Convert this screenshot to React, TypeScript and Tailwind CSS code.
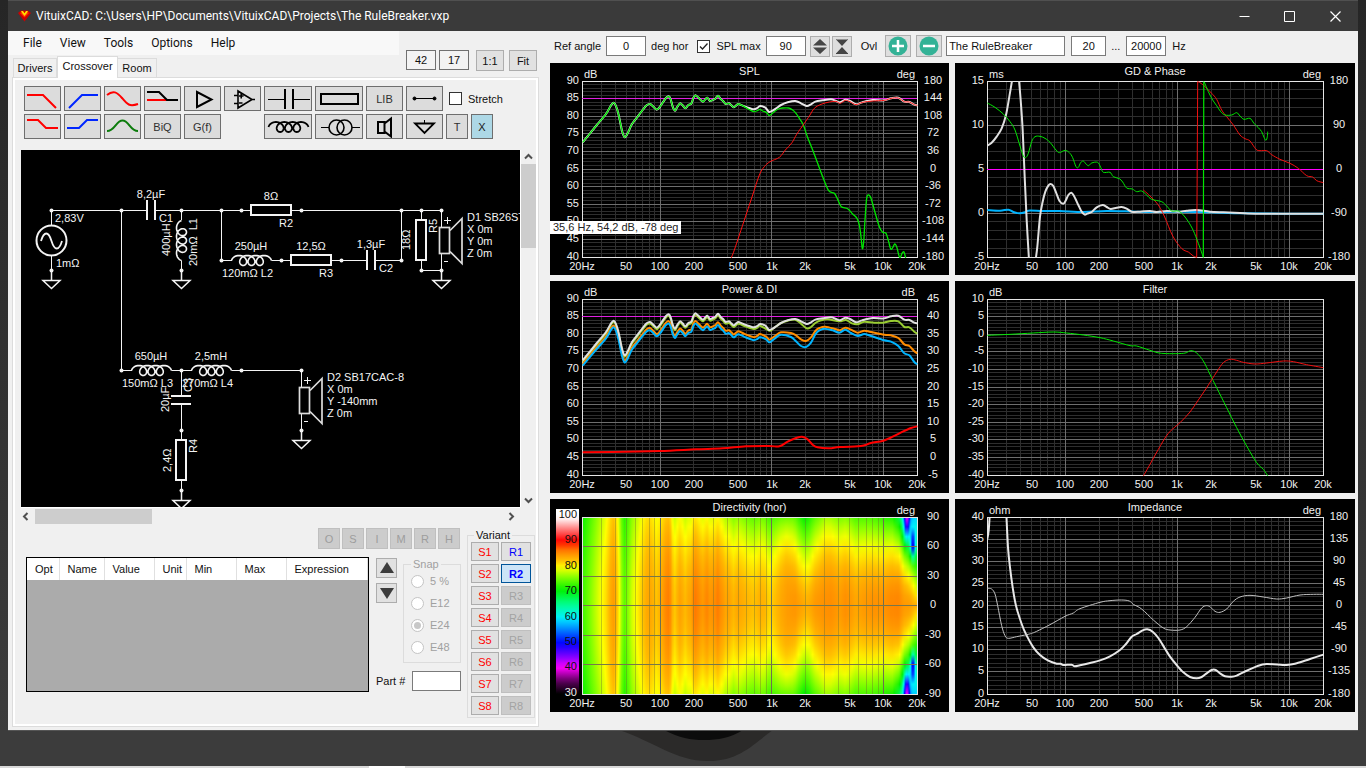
import React from "react";

type Pt = [number, number];

/* ---------- curve helpers ---------- */

const parse = (s: string): Pt[] =>
  s
    .trim()
    .split(/\s+/)
    .map((p) => p.split(",").map(Number) as Pt);

// Catmull-Rom spline; curve samples are stored in thirds of a pixel.
function spline(points: Pt[], dx: number, dy: number): string {
  const p = points.map(([x, y]) => [x / 3 - dx, y / 3 - dy] as Pt);
  const f = (n: number) => n.toFixed(2);
  let d = `M${f(p[0][0])} ${f(p[0][1])}`;
  for (let i = 0; i < p.length - 1; i++) {
    const a = p[Math.max(i - 1, 0)];
    const b = p[i];
    const c = p[i + 1];
    const e = p[Math.min(i + 2, p.length - 1)];
    d += `C${f(b[0] + (c[0] - a[0]) / 6)} ${f(b[1] + (c[1] - a[1]) / 6)} ${f(c[0] - (e[0] - b[0]) / 6)} ${f(c[1] - (e[1] - b[1]) / 6)} ${f(c[0])} ${f(c[1])}`;
  }
  return d;
}

/* ---------- curve data ---------- */

const LOW = parse(
  "110,247 150,198 180,162 195,136 203,128 210,138 218,165 228,212 236,232 245,220 258,192 275,170 290,150 302,136 312,132 322,140 332,149 342,140 352,125 360,114 368,109 374,118 380,140 387,152 393,142 402,130 410,136 418,145 427,135 436,131 442,114 448,106 456,112 464,120 471,125 478,118 484,113 492,123 500,120 508,116 516,107 524,117 532,124 539,132 549,130 556,136 563,142 570,137 577,132 588,136"
);
const WOOFER = LOW.concat(
  parse(
    "600,143 612,150 624,155 634,152 642,148 650,153 657,155 664,160 669,166 676,163 685,155 697,147 710,144 728,144 740,150 750,160 760,175 772,195 784,230 800,270 815,310 830,350 848,392 865,400 875,418 886,440 905,446 920,462 933,475 940,495 945,530 949,566 953,545 957,480 962,415 968,405 975,415 985,450 1000,500 1010,517 1020,520 1028,545 1034,567 1040,563 1046,552 1052,560 1057,580 1062,594 1068,580 1074,576 1079,594"
  )
);
const TOTAL = LOW.concat(
  parse(
    "600,141 612,145 624,148 634,144 642,138 657,142 664,150 670,156 680,152 692,144 705,135 725,127 748,123 765,130 782,138 795,133 808,125 830,121 855,118 870,123 882,127 898,119 912,123 930,133 945,128 955,125 980,120 1015,121 1035,115 1057,113 1075,125 1090,126 1105,134 1114,136"
  )
);
const TWEETER = parse(
  "555,596 565,570 580,525 600,465 620,405 640,345 655,320 672,305 700,292 718,270 738,248 752,223 775,190 790,168 805,145 825,133 850,126 870,124 882,130 898,121 912,125 930,134 950,127 980,123 1015,121 1035,115 1057,114 1075,125 1090,126 1105,134 1114,136"
);

const shifted = (base: number, slope: number): Pt[] =>
  TOTAL.filter(([x]) => x < 655).map(([x, y]) => [x, y + 6 + base + (x - 110) * slope] as Pt);

const WINDOW_AVG = shifted(4, 0.002).concat(
  parse(
    "670,164 680,159 692,150 705,141 725,134 748,131 765,143 782,157 795,153 808,141 825,133 845,130 880,136 900,132 920,143 938,144 955,137 985,140 1012,140 1035,135 1057,136 1075,153 1090,154 1105,167 1114,173"
  )
);
const EARLY = shifted(11, 0.036).concat(
  parse(
    "660,182 669,191 677,187 690,178 705,169 735,171 750,178 765,190 780,195 795,184 808,165 820,156 838,152 870,160 882,163 898,155 915,161 935,170 955,164 975,168 1015,176 1035,178 1057,186 1075,205 1090,210 1105,226 1114,232"
  )
);
const POWER = shifted(16, 0.044).concat(
  parse(
    "660,190 669,199 677,195 690,185 705,176 735,183 750,196 765,210 780,213 795,200 808,175 820,163 835,158 860,163 880,170 898,161 915,171 935,180 955,174 975,180 1015,193 1035,197 1057,210 1075,232 1090,238 1105,258 1114,265"
  )
);
const DI = parse(
  "110,529 200,528 340,525 450,520 530,517 600,511 670,510 700,511 725,497 750,486 768,482 785,490 800,506 815,514 850,517 880,513 935,511 955,508 975,501 1012,494 1040,482 1070,467 1095,456 1114,451"
);

const GD = [
  parse("110,258 125,248 140,230 155,205 168,165 178,110 188,50"),
  parse("206,50 212,120 218,210 224,350 230,480 237,600"),
  parse(
    "256,605 262,560 270,470 278,425 286,395 295,377 302,372 310,378 318,397 328,422 340,431 348,420 355,405 364,398 372,408 385,435 395,455 404,464 412,461 425,456 440,442 458,435 470,441 482,447 500,443 515,441 530,446 545,455 570,455 600,453 620,456 650,453 685,455 710,452 740,450 780,455 820,457 870,459 930,461 1120,461"
  ),
];
const GD_XO = parse(
  "112,450 150,452 175,449 190,456 208,460 225,457 235,452 280,453 330,453 400,456 470,453 560,455 640,456 700,455 780,457 880,460 1000,461 1120,461"
);
const PH_RED = [
  parse("580,390 595,403 610,418 625,435 638,458 650,485 662,515 675,540 690,560 702,571 715,576 730,588 740,592"),
  parse(
    "743,65 750,68 765,80 785,100 800,118 815,150 830,170 850,195 870,225 885,236 900,243 918,268 930,272 950,272 965,284 990,298 1020,310 1045,325 1070,347 1088,351 1100,362 1120,368"
  ),
];
const PH_GREEN = [
  parse(
    "112,129 135,142 160,162 180,185 195,210 210,258 220,288 227,293 235,280 245,245 255,230 270,229 285,235 300,247 318,270 328,278 345,271 358,278 368,293 378,320 385,322 392,308 400,303 408,312 416,317 425,309 443,307 452,322 460,337 480,337 490,350 508,356 518,366 530,384 547,387 560,395 575,393 590,405 605,418 635,425 650,438 665,453 685,453 700,465 715,485 730,512 745,550 760,592"
  ),
  parse(
    "763,66 775,95 788,120 800,137 812,155 825,165 845,165 860,158 870,168 882,178 900,175 912,190 925,203 935,215 942,232 948,241 952,230 953,215"
  ),
];

const FILTER_G = parse(
  "112,178 180,175 250,171 310,168 350,171 400,177 450,185 490,195 540,209 560,210 600,223 635,232 700,232 722,224 740,231 760,255 780,295 800,335 830,395 860,455 890,510 920,560 940,580 955,602"
);
const FILTER_R = parse(
  "579,602 600,565 625,520 655,472 690,440 720,408 745,372 770,335 800,288 820,260 840,250 860,253 880,259 915,264 950,261 1000,255 1030,257 1070,266 1120,275"
);

const Z_MAG = [
  parse("112,135 116,110 119,65"),
  parse(
    "169,60 174,160 180,220 188,280 198,335 215,390 230,425 250,460 270,483 295,500 320,509 332,509 340,513 365,512 374,517 390,514 420,507 450,499 480,487 510,468 528,450 545,428 560,420 578,409 592,406 608,413 625,432 645,464 660,488 680,513 700,535 720,549 740,553 755,549 770,538 785,528 797,528 810,538 825,547 845,548 860,545 880,535 920,517 950,510 1010,513 1040,508 1080,495 1120,482"
  ),
];
const Z_PH = parse(
  "112,283 125,285 135,300 143,335 155,395 165,425 175,433 200,428 230,422 245,418 260,412 300,392 345,367 370,357 390,344 450,325 480,320 515,318 538,321 550,331 575,345 610,378 640,402 660,408 690,408 710,398 735,370 755,342 770,335 782,340 795,352 810,355 830,345 850,322 870,309 900,304 940,309 980,315 1010,312 1050,303 1090,301 1120,301"
);

/* ---------- chart frame ---------- */

const FREQS: [number, string][] = [
  [20, "20Hz"],
  [50, "50"],
  [100, "100"],
  [200, "200"],
  [500, "500"],
  [1000, "1k"],
  [2000, "2k"],
  [5000, "5k"],
  [10000, "10k"],
  [20000, "20k"],
];
const GRID_F = [
  30, 40, 50, 60, 70, 80, 90, 100, 200, 300, 400, 500, 600, 700, 800, 900, 1000, 2000, 3000, 4000, 5000, 6000, 7000,
  8000, 9000, 10000,
];
const isDecade = (f: number) => f === 100 || f === 1000 || f === 10000;
const TOP = 18;
const LEFT = 32;

function range(from: number, to: number, step: number): number[] {
  const out: number[] = [];
  const n = Math.round((to - from) / step);
  for (let i = 0; i <= n; i++) out.push(from + i * step);
  return out;
}

type ChartProps = {
  id: string;
  title: string;
  w: number;
  h: number;
  divs: number;
  minor: number;
  left?: number[];
  leftUnit?: string;
  right?: number[];
  rightUnit?: string;
  field?: React.ReactNode;
  legend?: React.ReactNode;
  children?: React.ReactNode;
};

function Chart(p: ChartProps) {
  const right = p.w - 32;
  const bottom = p.h - 18;
  const fx = (f: number) => LEFT + ((right - LEFT) * Math.log10(f / 20)) / 3;
  const fy = (i: number, n: number) => TOP + ((bottom - TOP) * i) / n;
  const snap = (n: number) => Math.floor(n) + 0.5;
  const heat = Boolean(p.field);
  return (
    <svg
      viewBox={`0 0 ${p.w} ${p.h}`}
      className="block h-auto w-full bg-black"
      role="img"
      aria-label={p.title}
      fontFamily="'Liberation Sans', Arial, sans-serif"
      fontSize="11"
      fill="#f0f0f0"
    >
      <clipPath id={`clip-${p.id}`}>
        <rect x={LEFT} y={TOP} width={right - LEFT + 1} height={bottom - TOP + 1} />
      </clipPath>
      {p.field}
      <g shapeRendering="crispEdges" fill="none">
        {!heat &&
          range(1, p.divs * p.minor - 1, 1).map((i) => (
            <path key={i} d={`M${LEFT} ${snap(fy(i, p.divs * p.minor))}H${right}`} stroke="#2e2e2e" />
          ))}
        {GRID_F.filter((f) => !isDecade(f)).map((f) => (
          <path
            key={f}
            d={`M${snap(fx(f))} ${TOP}V${bottom}`}
            stroke={heat ? "#6b6b30" : "#2e2e2e"}
            strokeOpacity={heat ? 0.38 : 1}
          />
        ))}
        {GRID_F.filter(isDecade).map((f) => (
          <path key={f} d={`M${snap(fx(f))} ${TOP}V${bottom}`} stroke={heat ? "#6f6f50" : "#6e6e6e"} />
        ))}
        {range(1, p.divs - 1, 1).map((i) => (
          <path key={i} d={`M${LEFT} ${snap(fy(i, p.divs))}H${right}`} stroke={heat ? "#77774c" : "#6e6e6e"} />
        ))}
        <rect x={LEFT + 0.5} y={TOP + 0.5} width={right - LEFT} height={bottom - TOP} stroke="#e6e6e6" />
      </g>
      <g clipPath={`url(#clip-${p.id})`} fill="none" strokeLinejoin="round">
        {p.children}
      </g>
      <text x={p.w / 2} y="12" textAnchor="middle">
        {p.title}
      </text>
      {p.leftUnit && (
        <text x="34" y="15">
          {p.leftUnit}
        </text>
      )}
      {p.rightUnit && (
        <text x={right - 2} y="15" textAnchor="end">
          {p.rightUnit}
        </text>
      )}
      {p.left?.map((v, i) => (
        <text key={v} x="29" y={Math.floor(fy(i, p.left!.length - 1)) + 3} textAnchor="end">
          {v}
        </text>
      ))}
      {p.right?.map((v, i) => (
        <text key={v} x={p.w - 16} y={Math.floor(fy(i, p.right!.length - 1)) + 3} textAnchor="middle">
          {v}
        </text>
      ))}
      {FREQS.map(([f, t]) => (
        <text key={t} x={Math.round(fx(f))} y={bottom + 13} textAnchor="middle">
          {t}
        </text>
      ))}
      {p.legend}
    </svg>
  );
}

/* ---------- directivity field ---------- */

const COLORS: [number, number, number, number][] = [
  [29, 0, 0, 0],
  [34, 90, 0, 90],
  [39.5, 255, 0, 255],
  [44, 120, 0, 255],
  [49, 0, 0, 255],
  [54, 0, 120, 255],
  [59, 0, 240, 255],
  [64.5, 0, 255, 140],
  [70, 0, 240, 0],
  [75, 130, 255, 0],
  [79, 255, 255, 0],
  [82, 255, 185, 0],
  [85.5, 255, 125, 0],
  [89.5, 255, 0, 0],
  [95, 255, 150, 150],
  [98.5, 255, 255, 255],
];

function colorOf(v: number): string {
  if (v <= COLORS[0][0]) return "rgb(0,0,0)";
  for (let i = 1; i < COLORS.length; i++) {
    const b = COLORS[i];
    if (v <= b[0]) {
      const a = COLORS[i - 1];
      const t = (v - a[0]) / (b[0] - a[0]);
      const m = (k: number) => Math.round(a[k] + (b[k] - a[k]) * t);
      return `rgb(${m(1)},${m(2)},${m(3)})`;
    }
  }
  return "rgb(255,255,255)";
}

function lerp(points: Pt[], x: number): number {
  if (x <= points[0][0]) return points[0][1];
  for (let i = 1; i < points.length; i++) {
    if (x <= points[i][0]) {
      const [x0, y0] = points[i - 1];
      const [x1, y1] = points[i];
      return y0 + ((y1 - y0) * (x - x0)) / (x1 - x0);
    }
  }
  return points[points.length - 1][1];
}

const DROP = parse(
  "110,2 230,2 340,3 440,5.5 520,6.5 600,8 680,8.5 740,10 775,13 800,11 840,8.5 900,9.5 1000,12 1040,14 1060,18 1075,24 1090,26 1114,25"
);
const SHAPE = parse("110,1.8 680,1.8 720,2.5 760,1.5 790,1.4 840,2 1000,1.7 1060,2 1090,1.5 1114,0.95");

function levelAt(x: number, deg: number): number {
  const axis = 89.6 - (lerp(TOTAL, x) - 65) / 10.55;
  const a = Math.abs(deg);
  const g = (cx: number, wx: number, ca: number, wa: number) =>
    Math.exp(-(((x - cx) / wx) ** 2) - ((a - ca) / wa) ** 2);
  return axis - lerp(DROP, x) * (a / 90) ** lerp(SHAPE, x) - 20 * g(1101, 8, 62, 12) - 19 * g(1083, 9, 88, 20);
}

function Field() {
  const cols = range(0, 334, 1);
  const angles = range(-90, 90, 10);
  return (
    <g shapeRendering="crispEdges">
      <defs>
        {cols.map((c) => (
          <linearGradient key={c} id={`col${c}`} x1="0" y1="0" x2="0" y2="1">
            {angles.map((a) => (
              <stop key={a} offset={(a + 90) / 180} stopColor={colorOf(levelAt(110 + c * 3, a))} />
            ))}
          </linearGradient>
        ))}
        <linearGradient id="scale" x1="0" y1="0" x2="0" y2="1">
          {range(0, 36, 1).map((i) => (
            <stop key={i} offset={i / 36} stopColor={colorOf(102 - (i / 36) * 73)} />
          ))}
        </linearGradient>
      </defs>
      {cols.map((c) => (
        <rect key={c} x={LEFT + c} y={TOP} width="1" height="177" fill={`url(#col${c})`} />
      ))}
      <rect x="6" y="10" width="23" height="185" fill="url(#scale)" />
    </g>
  );
}

function ScaleLabels() {
  return (
    <g>
      {range(0, 7, 1).map((i) => (
        <text key={i} x="27" y={Math.round(19 + i * 25.4)} textAnchor="end" fill={i === 7 ? "#f0f0f0" : "#101010"}>
          {100 - i * 10}
        </text>
      ))}
    </g>
  );
}

/* ---------- schematic ---------- */

function coilPath(): string {
  const c = 1.326;
  const r = 5.4;
  let d = "";
  const n = 112;
  for (let i = 0; i <= n; i++) {
    const t = -Math.PI / 2 + (i / n) * 7 * Math.PI;
    const x = c * (t + Math.PI / 2) + r * Math.sin(t) + r;
    const y = -5 * Math.cos(t);
    d += `${i ? "L" : "M"}${x.toFixed(2)} ${y.toFixed(2)}`;
  }
  return d;
}
const COIL = coilPath();

const Coil = ({ x, y, up }: { x: number; y: number; up?: boolean }) => (
  <path d={COIL} transform={`translate(${x} ${y})${up ? " rotate(-90)" : ""}`} strokeWidth="1.6" />
);
const Ground = ({ x, y }: { x: number; y: number }) => (
  <path d={`M${x} ${y}v9.5M${x - 8.5} ${y + 10}h17l-8.5 8z`} strokeWidth="1.5" />
);
const Speaker = ({ x, y }: { x: number; y: number }) => (
  <g strokeWidth="1.7" stroke="#dcdcdc">
    <rect x={x - 2} y={y} width="10" height="26" />
    <path d={`M${x + 8.5} ${y + 3}l12 -12v45l-12 -12`} />
  </g>
);
const V = ({ x, y, children }: { x: number; y: number; children: React.ReactNode }) => (
  <text transform={`translate(${x} ${y}) rotate(-90)`}>{children}</text>
);

const NODES: Pt[] = [
  [30.5, 60.5], [100.5, 60.5], [160.5, 60.5], [200.5, 60.5], [220.5, 60.5], [280.5, 60.5], [380.5, 60.5],
  [400.5, 60.5], [420.5, 60.5], [30.5, 120.5], [160.5, 120.5], [200.5, 110.5], [260.5, 110.5], [320.5, 110.5],
  [380.5, 110.5], [400.5, 120.5], [420.5, 120.5], [100.5, 220.5], [160.5, 220.5], [220.5, 220.5], [280.5, 220.5],
  [160.5, 280.5], [280.5, 280.5], [160.5, 340.5],
];

function Schematic() {
  return (
    <svg
      viewBox="0 0 499 357"
      className="block h-auto min-w-0 flex-1 bg-black"
      role="img"
      aria-label="Crossover schematic"
      fontFamily="'Liberation Sans', Arial, sans-serif"
      fontSize="11"
      fill="#f4f4f4"
    >
      <g fill="none" stroke="#f4f4f4">
        <path d="M30.5 60.5H126M134 60.5H230M270 60.5H420.5M30.5 60.5V75M30.5 106V120M100.5 60.5V220.5H111M150.5 220.5H171M210.5 220.5H280.5V237M280.5 264V281M160.5 60.5V70M160.5 110.5V121M200.5 60.5V110.5H211M250.5 110.5H270M310 110.5H346M354 110.5H380.5V60.5M400.5 60.5V70M400.5 110V120.5H420.5M420.5 60.5V77M420.5 104V121M160.5 220.5V246M160.5 254V290M160.5 330V341" />
        <g strokeWidth="2">
          <path d="M126 50V70M134 50V70M346 100V120M354 100V120M150 246H170M150 254H170" />
          <rect x="230" y="55" width="40" height="10" />
          <rect x="270" y="105" width="40" height="10" />
          <rect x="395" y="70" width="10" height="40" />
          <rect x="155" y="290" width="10" height="40" />
          <circle cx="30.5" cy="90.5" r="15" />
          <path d="M20 91c3-10 7.5-10 10.5 0s7.5 10 10.5 0" strokeWidth="1.8" />
        </g>
        <Coil x={210.5} y={110.5} />
        <Coil x={110.5} y={220.5} />
        <Coil x={170.5} y={220.5} />
        <Coil x={160.5} y={110.5} up />
        <Ground x={30.5} y={120.5} />
        <Ground x={160.5} y={120.5} />
        <Ground x={420.5} y={120.5} />
        <Ground x={280.5} y={280.5} />
        <Ground x={160.5} y={340.5} />
        <Speaker x={420.5} y={77.5} />
        <Speaker x={280.5} y={237.5} />
        <path d="M423 70.5h7M426.5 67v7M283 230.5h7M286.5 227v7M423 111.5h4M283 271.5h4" />
      </g>
      {NODES.map(([x, y]) => (
        <circle key={`${x}-${y}`} cx={x} cy={y} r="2" />
      ))}
      <text x="130" y="48" textAnchor="middle">8,2µF</text>
      <text x="138" y="72">C1</text>
      <text x="34" y="72">2,83V</text>
      <text x="35" y="117">1mΩ</text>
      <V x={149} y={106}>400µH</V>
      <V x={176} y={116}>20mΩ&nbsp; L1</V>
      <text x="250" y="50" textAnchor="middle">8Ω</text>
      <text x="258" y="77">R2</text>
      <text x="230" y="100" textAnchor="middle">250µH</text>
      <text x="201" y="127">120mΩ L2</text>
      <text x="290" y="100" textAnchor="middle">12,5Ω</text>
      <text x="298" y="127">R3</text>
      <text x="350" y="98" textAnchor="middle">1,3µF</text>
      <text x="358" y="122">C2</text>
      <V x={389} y={100}>18Ω</V>
      <V x={416} y={83}>R5</V>
      <text x="446" y="71">D1 SB26ST</text>
      <text x="446" y="83">X 0m</text>
      <text x="446" y="95">Y 0m</text>
      <text x="446" y="107">Z 0m</text>
      <text x="130" y="210" textAnchor="middle">650µH</text>
      <text x="190" y="210" textAnchor="middle">2,5mH</text>
      <text x="101" y="237">150mΩ L3</text>
      <text x="161" y="237">270mΩ L4</text>
      <V x={148} y={262}>20µF</V>
      <V x={171} y={242}>C3</V>
      <V x={150} y={322}>2,4Ω</V>
      <V x={176} y={303}>R4</V>
      <text x="306" y="231">D2 SB17CAC-8</text>
      <text x="306" y="243">X 0m</text>
      <text x="306" y="255">Y -140mm</text>
      <text x="306" y="267">Z 0m</text>
    </svg>
  );
}

/* ---------- toolbar ---------- */

type ToolProps = { label: string; wide?: boolean; children: React.ReactNode };
function Tool({ label, wide, children }: ToolProps) {
  return (
    <button
      type="button"
      aria-label={label}
      className={
        "flex h-[25px] items-center justify-center border border-[#6e6e6e] bg-[#dcdcdc] text-[#303030] " +
        (wide ? "w-[48px]" : "w-[37px]")
      }
    >
      {children}
    </button>
  );
}
function Draw({ d, color = "#000", sw = 2, wide = false }: { d: string; color?: string; sw?: number; wide?: boolean }) {
  return (
    <svg
      viewBox={wide ? "0 0 46 23" : "0 0 35 23"}
      className={wide ? "h-[23px] w-[46px]" : "h-[23px] w-[35px]"}
      fill="none"
      stroke={color}
      strokeWidth={sw}
    >
      <path d={d} />
    </svg>
  );
}

function Toolbar() {
  return (
    <div className="flex flex-col gap-[3px] pl-[9px]">
      <div className="flex gap-[3px]">
        <Tool label="Low pass"><Draw color="#f00" d="M2 8H18L31 21" /></Tool>
        <Tool label="High pass"><Draw color="#0026ff" d="M4 21L17 8H33" /></Tool>
        <Tool label="Low shelf slope"><Draw color="#f00" d="M2 8C8 3 12 5 17 11S24 20 33 17" /></Tool>
        <Tool label="Two way">
          <svg viewBox="0 0 35 23" className="h-[23px] w-[35px]" fill="none" strokeWidth="2">
            <path d="M2 13H22" stroke="#f00" />
            <path d="M2 5H14L22 13H33" stroke="#000" />
          </svg>
        </Tool>
        <Tool label="Buffer"><Draw d="M12 5V20L26.5 12.5z" /></Tool>
        <Tool label="Op amp"><Draw sw={1.6} d="M13 4V21L27 12.5zM27 12.5H30M9 8.5H13M9 16.5H13M14 9H18.5M16.2 6.5V11.5M14 16H17.5" /></Tool>
        <Tool label="Capacitor" wide>
          <svg viewBox="0 0 46 23" className="h-[23px] w-[46px]" fill="none" stroke="#000">
            <path d="M3 12.5H20M28 12.5H45" />
            <path d="M20 2V22M28 2V22" strokeWidth="2" />
          </svg>
        </Tool>
        <Tool label="Resistor" wide><Draw wide d="M5 7H42V17H5z" /></Tool>
        <Tool label="Library">LIB</Tool>
        <Tool label="Wire">
          <svg viewBox="0 0 35 23" className="h-[23px] w-[35px]" stroke="#000">
            <path d="M7 11.5H28" />
            <circle cx="7.5" cy="11.5" r="1.5" />
            <circle cx="27.5" cy="11.5" r="1.5" />
          </svg>
        </Tool>
        <label className="ml-[3px] flex items-center gap-[6px]">
          <input type="checkbox" className="h-[13px] w-[13px] appearance-none border border-[#333] bg-white" />
          Stretch
        </label>
      </div>
      <div className="flex gap-[3px]">
        <Tool label="Low shelf"><Draw color="#f00" d="M2 5H13L21 13H33" /></Tool>
        <Tool label="High shelf"><Draw color="#0026ff" d="M2 13H14L22 5H33" /></Tool>
        <Tool label="Peak"><Draw color="#0c7c0c" d="M2 16C10 16 11 5.5 17.5 5.5S25 16 33 16" /></Tool>
        <Tool label="BiQ">BiQ</Tool>
        <Tool label="G(f)">G(f)</Tool>
        <span className="w-[37px]" />
        <Tool label="Inductor" wide>
          <svg viewBox="0 0 46 23" className="h-[23px] w-[46px]" fill="none" stroke="#000" strokeWidth="1.8">
            <path d={COIL} transform="translate(3.5 12)" />
          </svg>
        </Tool>
        <Tool label="Transformer" wide>
          <svg viewBox="0 0 46 23" className="h-[23px] w-[46px]" fill="none" stroke="#000">
            <path d="M5 12.5H13M36 12.5H44" />
            <circle cx="20.5" cy="12.5" r="7.5" strokeWidth="1.6" />
            <circle cx="28.5" cy="12.5" r="7.5" strokeWidth="1.6" />
          </svg>
        </Tool>
        <Tool label="Driver"><Draw d="M11 7H17.5V18H11zM17.5 8.5L24 3.5V21.5L17.5 16.5" /></Tool>
        <Tool label="Ground">
          <svg viewBox="0 0 35 23" className="h-[23px] w-[35px]" fill="none" stroke="#000">
            <path d="M17.5 5V9" />
            <path d="M8 8.5H27L17.5 18z" strokeWidth="1.8" />
          </svg>
        </Tool>
        <button type="button" className="h-[25px] w-[22px] border border-[#6e6e6e] bg-[#dcdcdc] text-[#303030]">T</button>
        <button type="button" className="h-[25px] w-[22px] border border-[#6e6e6e] bg-[#add8e6] text-[#202020]">X</button>
      </div>
    </div>
  );
}

/* ---------- lower left area ---------- */

const COLS: [string, string][] = [
  ["Opt", "w-[32px]"],
  ["Name", "w-[45px]"],
  ["Value", "w-[50px]"],
  ["Unit", "w-[32px]"],
  ["Min", "w-[50px]"],
  ["Max", "w-[50px]"],
  ["Expression", ""],
];

const N8 = [1, 2, 3, 4, 5, 6, 7, 8];

function variantClass(n: number): string {
  if (n === 1) return "border-[#adadad] bg-[#e1e1e1] text-[#0000ff]";
  if (n === 2) return "border-[#005499] bg-[#cce4f7] font-bold text-[#0000ff]";
  return "border-[#bfbfbf] bg-[#cccccc] text-[#a3a3a3]";
}

function LowerArea() {
  return (
    <div className="mt-1 flex gap-[6px] pl-[11px]">
      <div className="min-w-0 flex-1">
        <div className="flex justify-end gap-[2px] pr-px">
          {["O", "S", "I", "M", "R", "H"].map((t) => (
            <button
              key={t}
              type="button"
              disabled
              className="h-[21px] w-[22px] border border-[#bfbfbf] bg-[#cccccc] text-[#9d9d9d]"
            >
              {t}
            </button>
          ))}
        </div>
        <div className="mt-2 flex gap-[7px]">
          <div className="h-[135px] min-w-0 flex-1 border border-black bg-[#ababab]">
            <table className="w-full table-fixed border-collapse bg-white">
              <thead>
                <tr className="h-[22px]">
                  {COLS.map(([c, w]) => (
                    <th key={c} scope="col" className={"border-r border-[#e0e0e0] pl-2 text-left font-normal " + w}>
                      {c}
                    </th>
                  ))}
                </tr>
              </thead>
            </table>
          </div>
          <div className="flex w-[85px] flex-col justify-between pt-px pb-px">
            <div className="flex justify-between">
              <div className="flex flex-col gap-[5px]">
                <button type="button" aria-label="Move up" className="flex h-[20px] w-[21px] items-center justify-center border border-[#adadad] bg-[#e1e1e1]">
                  <svg viewBox="0 0 14 12" className="h-3 w-3.5" fill="#3c3c3c"><path d="M7 0L14 11H0z" /></svg>
                </button>
                <button type="button" aria-label="Move down" className="flex h-[20px] w-[21px] items-center justify-center border border-[#adadad] bg-[#e1e1e1]">
                  <svg viewBox="0 0 14 12" className="h-3 w-3.5" fill="#3c3c3c"><path d="M7 12L14 1H0z" /></svg>
                </button>
              </div>
              <fieldset className="w-[58px] border border-[#dcdcdc] pb-1 pl-[7px] text-[#a0a0a0]">
                <legend className="px-0.5 leading-3">Snap</legend>
                {["5 %", "E12", "E24", "E48"].map((t) => (
                  <label key={t} className="flex h-[22px] items-center gap-1.5">
                    <span className="grid place-items-center">
                      <input
                        type="radio"
                        name="snap"
                        disabled
                        defaultChecked={t === "E24"}
                        className="peer col-start-1 row-start-1 h-[13px] w-[13px] appearance-none rounded-full border border-[#c4c4c4] bg-white"
                      />
                      <span className="col-start-1 row-start-1 hidden h-[7px] w-[7px] rounded-full bg-[#c8c8c8] peer-checked:block" />
                    </span>
                    {t}
                  </label>
                ))}
              </fieldset>
            </div>
            <label className="flex items-center justify-between">
              Part #
              <input type="text" className="h-[20px] w-[49px] border border-[#7a7a7a] bg-white px-1" />
            </label>
          </div>
        </div>
      </div>
      <fieldset className="mr-px w-[68px] shrink-0 border border-[#dcdcdc] px-[3px] pb-[2px]">
        <legend className="ml-[3px] px-0.5 leading-[14px]">Variant</legend>
        <div className="grid grid-cols-[28px_30px] gap-x-[2px] gap-y-[3px]">
          {N8.map((n) => (
            <React.Fragment key={n}>
              <button type="button" className="h-[19px] border border-[#adadad] bg-[#e1e1e1] text-[#ff0000]">
                {"S" + n}
              </button>
              <button type="button" disabled={n > 2} className={"h-[19px] border " + variantClass(n)}>
                {"R" + n}
              </button>
            </React.Fragment>
          ))}
        </div>
      </fieldset>
    </div>
  );
}

function Chevron({ d }: { d: string }) {
  return (
    <svg viewBox="0 0 9 9" className="h-[9px] w-[9px]" fill="none" stroke="#505050" strokeWidth="2">
      <path d={d} />
    </svg>
  );
}

function LeftPane() {
  const small = "h-[20px] w-[30px] border border-[#707070] bg-[#f3f3f3] text-center";
  return (
    <div className="w-[531px] shrink-0 pl-1">
      <div className="flex h-[46px] justify-between pr-[2px]">
        <div className="flex flex-col justify-between">
          <nav className="-ml-1 flex h-6 w-[391px] items-center gap-[18px] bg-[#f8f8f8] pl-[15px] font-[Roboto,sans-serif] text-[12px]">
            {["File", "View", "Tools", "Options", "Help"].map((m) => (
              <button key={m} type="button">{m}</button>
            ))}
          </nav>
          <div role="tablist" className="relative top-px flex items-end pl-px">
            <button role="tab" aria-selected="false" type="button" className="h-[20px] w-[44px] border border-[#dcdcdc]">Drivers</button>
            <button role="tab" aria-selected="true" type="button" className="h-[22px] w-[61px] border border-b-0 border-[#dcdcdc] bg-white pb-1">Crossover</button>
            <button role="tab" aria-selected="false" type="button" className="h-[20px] w-[39px] border border-l-0 border-[#dcdcdc]">Room</button>
          </div>
        </div>
        <div className="flex items-start pt-[19px]">
          <input aria-label="Columns" defaultValue="42" className={small} />
          <input aria-label="Rows" defaultValue="17" className={small + " ml-[3px]"} />
          <button type="button" className="ml-[7px] h-[21px] w-[28px] border border-[#adadad] bg-[#e1e1e1]">1:1</button>
          <button type="button" className="ml-[5px] h-[21px] w-[28px] border border-[#adadad] bg-[#e1e1e1]">Fit</button>
        </div>
      </div>
      <div className="border border-[#dcdcdc] bg-white p-[2px]">
        <div className="bg-[#f0f0f0] pt-[6px] pb-[6px]">
          <Toolbar />
          <div className="mt-[11px] pl-[6px]">
            <div className="flex">
              <Schematic />
              <div className="flex w-[16px] flex-col items-center justify-between border-l border-white py-[2px]">
                <div className="flex w-full flex-col items-center gap-[3px]">
                  <Chevron d="M1 6.5L4.5 3L8 6.5" />
                  <div className="h-[84px] w-full bg-[#cdcdcd]" />
                </div>
                <Chevron d="M1 2.5L4.5 6L8 2.5" />
              </div>
            </div>
            <div className="mr-[16px] flex h-[17px] items-center justify-between border-t border-white pr-1">
              <div className="flex items-center gap-[5px]">
                <Chevron d="M6.5 1L3 4.5L6.5 8" />
                <div className="h-[15px] w-[117px] bg-[#cdcdcd]" />
              </div>
              <Chevron d="M2.5 1L6 4.5L2.5 8" />
            </div>
          </div>
          <LowerArea />
        </div>
      </div>
    </div>
  );
}

/* ---------- right area ---------- */

function RightBar() {
  const box = "h-[20px] border border-[#7a7a7a] bg-white ";
  const spin = "flex h-[21px] w-[20px] items-center justify-center border border-[#adadad] bg-[#dedede]";
  return (
    <div className="flex h-8 items-center pb-[2px] pl-1">
      <label className="flex items-center">
        Ref angle
        <input defaultValue="0" className={box + "ml-[5px] w-[40px] text-center"} />
      </label>
      <span className="ml-[5px]">deg hor</span>
      <label className="ml-[9px] flex items-center gap-[6px]">
        <span className="grid">
          <input type="checkbox" defaultChecked className="col-start-1 row-start-1 h-[13px] w-[13px] appearance-none border border-[#333] bg-white" />
          <svg viewBox="0 0 13 13" className="pointer-events-none col-start-1 row-start-1 h-[13px] w-[13px]" fill="none" stroke="#222" strokeWidth="1.3">
            <path d="M3 6.5L5.5 9L10.5 3.5" />
          </svg>
        </span>
        SPL max
      </label>
      <input aria-label="SPL max value" defaultValue="90" className={box + "ml-[5px] w-[40px] text-center"} />
      <button type="button" aria-label="Expand range" className={spin + " ml-[4px]"}>
        <svg viewBox="0 0 14 17" className="h-[17px] w-[14px]" fill="#454545"><path d="M7 1L14 7.5H0zM7 16L14 9.5H0z" /></svg>
      </button>
      <button type="button" aria-label="Compress range" className={spin + " ml-[2px]"}>
        <svg viewBox="0 0 14 17" className="h-[17px] w-[14px]" fill="#454545"><path d="M7 8L13 1.5H1zM7 9L13 15.5H1zM1 1h12v1H1zM1 15h12v1H1z" /></svg>
      </button>
      <span className="ml-[9px]">Ovl</span>
      <button type="button" aria-label="Add overlay" className="ml-[8px] flex h-[22px] w-[26px] items-center justify-center border border-[#adadad] bg-[#dedede]">
        <svg viewBox="0 0 20 20" className="h-5 w-5"><circle cx="10" cy="10" r="9.5" fill="#33b296" /><path d="M4 10H16M10 4V16" stroke="#fff" strokeWidth="2.5" /></svg>
      </button>
      <button type="button" aria-label="Remove overlay" className="ml-[5px] flex h-[22px] w-[26px] items-center justify-center border border-[#adadad] bg-[#dedede]">
        <svg viewBox="0 0 20 20" className="h-5 w-5"><circle cx="10" cy="10" r="9.5" fill="#33b296" /><path d="M4 10H16" stroke="#fff" strokeWidth="2.5" /></svg>
      </button>
      <input aria-label="Overlay name" defaultValue="The RuleBreaker" className={box + "ml-[4px] w-[119px] px-[2px]"} />
      <input aria-label="Minimum frequency" defaultValue="20" className={box + "ml-[6px] w-[35px] text-center"} />
      <span className="ml-[5px]">...</span>
      <input aria-label="Maximum frequency" defaultValue="20000" className={box + "ml-[6px] w-[40px] text-center"} />
      <span className="ml-[6px]">Hz</span>
    </div>
  );
}

const S = ({ pts, o, c, w = 1 }: { pts: Pt[]; o: Pt; c: string; w?: number }) => (
  <path d={spline(pts, o[0], o[1])} stroke={c} strokeWidth={w} />
);

const Target = ({ y, w, c }: { y: number; w: number; c: string }) => (
  <rect x={LEFT} y={y} width={w} height="1" fill={c} />
);

function Charts() {
  const a: Pt = [4, 3];
  const b: Pt = [4, 5];
  const g: Pt = [5, 3];
  const k: Pt = [5, 5];
  return (
    <div className="grid grid-cols-[399fr_400fr] gap-[6px]">
      <div className="relative">
        <Chart id="spl" title="SPL" w={399} h={212} divs={10} minor={5} left={range(90, 40, -5)} leftUnit="dB" right={range(180, -180, -36)} rightUnit="deg">
          <Target y={35} w={335} c="#e020e0" />
          <S pts={TOTAL} o={a} c="#e8e8e8" w={2} />
          <S pts={WOOFER} o={a} c="#00e600" w={1.3} />
          <S pts={TWEETER} o={a} c="#ff1010" w={1} />
        </Chart>
        <div className="absolute top-[158px] left-0 h-[13px] bg-white px-[3px] leading-[13px] whitespace-nowrap text-[#222]">
          35,6 Hz, 54,2 dB, -78 deg
        </div>
      </div>
      <Chart id="gd" title="GD & Phase" w={400} h={212} divs={4} minor={5} left={range(15, -5, -5)} leftUnit="ms" right={range(180, -180, -90)} rightUnit="deg">
        <Target y={106} w={336} c="#ff00ff" />
        <S pts={GD_XO} o={g} c="#00b4ff" w={2} />
        {GD.map((c, i) => (
          <S key={i} pts={c} o={g} c="#e0e0e0" w={2} />
        ))}
        {PH_RED.map((c, i) => (
          <S key={i} pts={c} o={g} c="#f01010" />
        ))}
        <path d="M241.7 194.5L242.7 18.5" stroke="#f01010" />
        {PH_GREEN.map((c, i) => (
          <S key={i} pts={c} o={g} c="#00e600" />
        ))}
        <path d="M248.3 194.5L248.8 18.5" stroke="#00e600" strokeWidth="1.2" />
      </Chart>
      <Chart id="power" title="Power & DI" w={399} h={212} divs={10} minor={5} left={range(90, 40, -5)} leftUnit="dB" right={range(45, -5, -5)} rightUnit="dB">
        <Target y={35} w={335} c="#e020e0" />
        <S pts={WINDOW_AVG} o={b} c="#9acd32" w={2} />
        <S pts={EARLY} o={b} c="#ff8c00" w={2} />
        <S pts={POWER} o={b} c="#00b4ff" w={2} />
        <S pts={TOTAL} o={a} c="#e0e0e0" w={2} />
        <S pts={DI} o={b} c="#ff0000" w={2} />
      </Chart>
      <Chart id="filter" title="Filter" w={400} h={212} divs={10} minor={5} left={range(10, -40, -5)} leftUnit="dB">
        <S pts={FILTER_G} o={k} c="#00e600" />
        <S pts={FILTER_R} o={k} c="#f01010" />
      </Chart>
      <Chart id="dir" title="Directivity (hor)" w={399} h={213} divs={6} minor={1} right={range(90, -90, -30)} rightUnit="deg" field={<Field />} legend={<ScaleLabels />} />
      <Chart id="imp" title="Impedance" w={400} h={213} divs={8} minor={5} left={range(40, 0, -5)} leftUnit="ohm" right={range(180, -180, -45)} rightUnit="deg">
        {Z_MAG.map((c, i) => (
          <S key={i} pts={c} o={k} c="#e8e8e8" w={2} />
        ))}
        <S pts={Z_PH} o={k} c="#c0c0c0" />
      </Chart>
    </div>
  );
}

export default function App() {
  return (
    <div className="flex min-h-screen flex-col bg-[#3b3b3b] bg-linear-to-b from-[#262626] to-[#3d3d3d] font-['Liberation_Sans',Arial,sans-serif] text-[11px] leading-[14px] text-[#111]">
      <div className="mx-2 bg-[#f0f0f0]">
        <header className="flex h-[31px] items-center border-t border-[#505050] bg-[#3a3a3a] pl-[10px] font-[Roboto,sans-serif] text-[12px] text-white">
          <svg viewBox="0 0 13 12" className="h-3 w-[13px]">
            <path d="M0 3L3 0.5H10L13 3L6.5 11.5z" fill="#cc0000" />
            <path d="M2 3L4 1.5L6.5 5L9 1.5L11 3L6.5 7.5z" fill="#ff3000" />
            <path d="M3 1H5L6.5 3.2L8 1H10L8.5 3.5L6.5 6L4.5 3.5z" fill="#ffe000" />
          </svg>
          <h1 className="ml-[5px]">VituixCAD: C:\Users\HP\Documents\VituixCAD\Projects\The RuleBreaker.vxp</h1>
          <div className="ml-auto flex">
            <button type="button" aria-label="Minimize" className="flex h-[30px] w-[46px] items-center justify-center">
              <svg viewBox="0 0 11 11" className="h-[11px] w-[11px]" stroke="#fff"><path d="M0.5 5.5H10.5" /></svg>
            </button>
            <button type="button" aria-label="Maximize" className="flex h-[30px] w-[45px] items-center justify-center">
              <svg viewBox="0 0 11 11" className="h-[11px] w-[11px]" fill="none" stroke="#fff"><path d="M0.5 0.5H10.5V10.5H0.5z" /></svg>
            </button>
            <button type="button" aria-label="Close" className="flex h-[30px] w-[46px] items-center justify-center">
              <svg viewBox="0 0 11 11" className="h-[11px] w-[11px]" fill="none" stroke="#fff" strokeWidth="1.2"><path d="M0.5 0.5L10.5 10.5M10.5 0.5L0.5 10.5" /></svg>
            </button>
          </div>
        </header>
        <main className="flex pb-[3px]">
          <LeftPane />
          <section className="min-w-0 flex-1 pr-[3px] pl-[11px]">
            <RightBar />
            <Charts />
          </section>
        </main>
      </div>
      <svg viewBox="0 0 1366 36" className="block h-auto w-full" aria-hidden="true">
        <rect width="1366" height="36" fill="#3c3c3c" />
        <path d="M619 0C655 12 675 31 708 31S755 12 773 0z" fill="#2b2a29" />
        <path d="M664 0C680 8 690 10 704 10S730 8 743 0z" fill="#0c0c0c" />
        <path d="M8 0.5H1358" stroke="#555" />
      </svg>
      <div className="flex h-[2px] bg-[#d9d9d9]">
        <div className="ml-[27%] w-[36px] bg-white" />
      </div>
    </div>
  );
}
